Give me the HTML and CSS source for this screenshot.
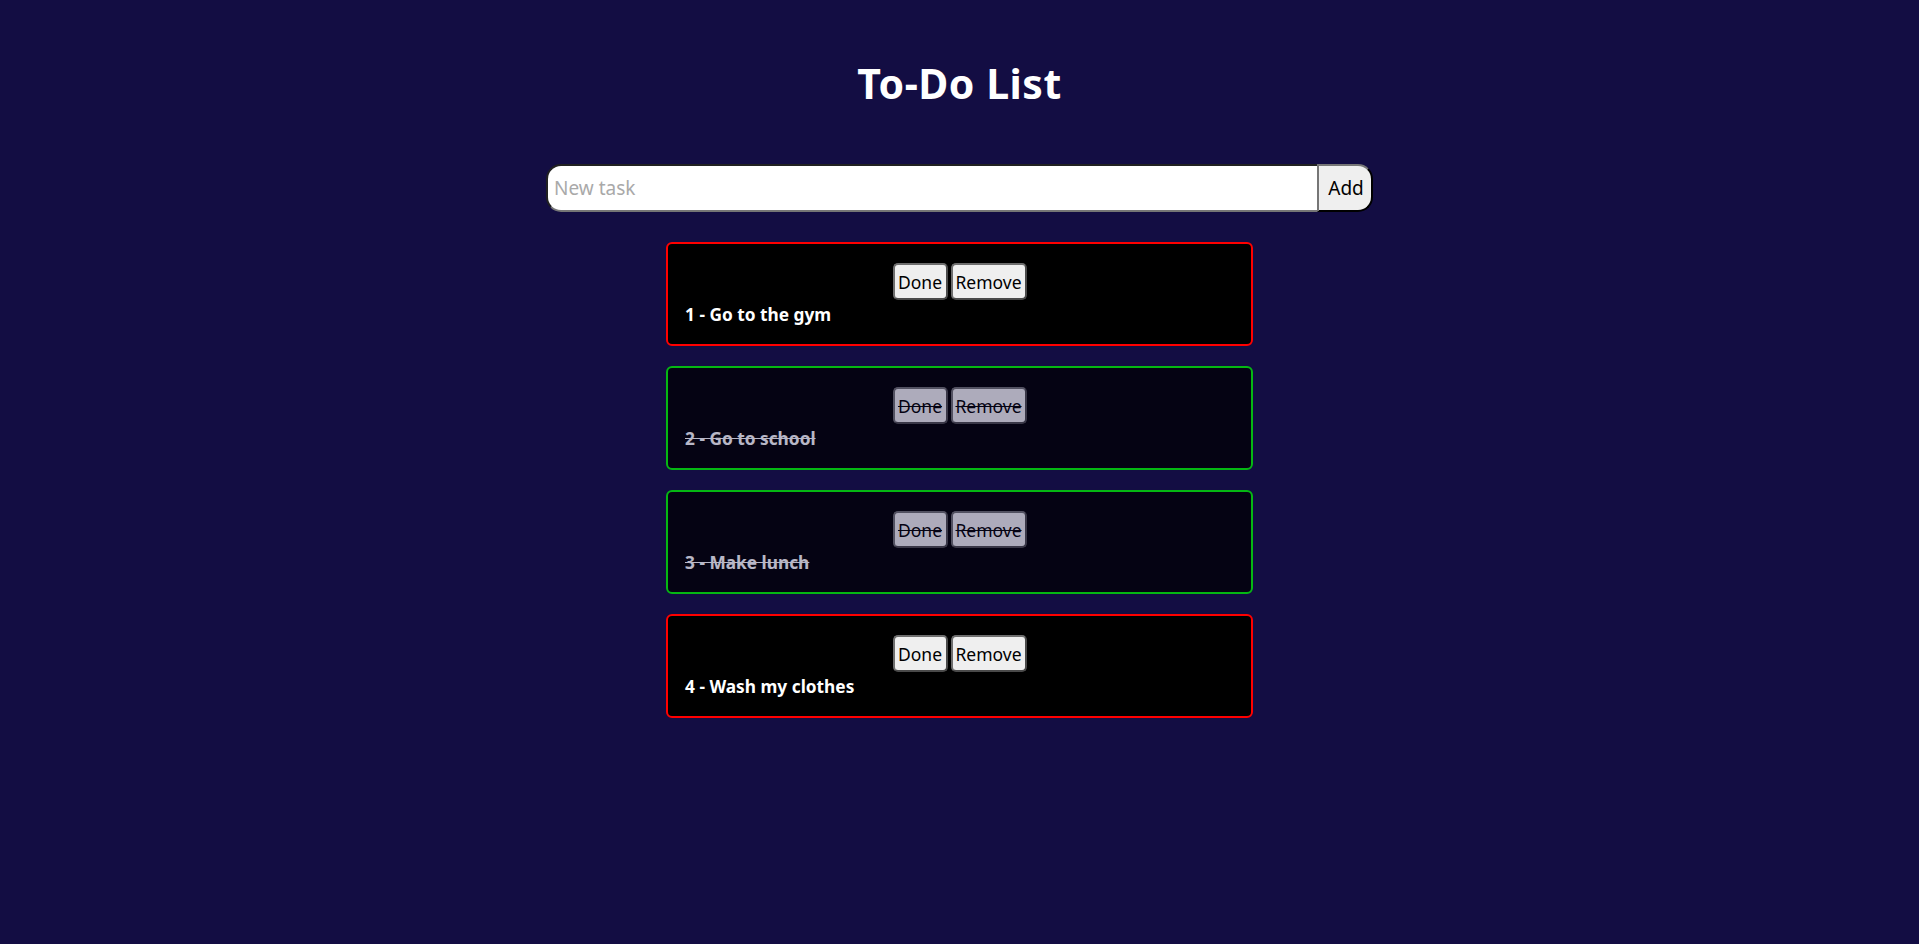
FILE: index.html
```html
<!DOCTYPE html>
<html lang="en">
<head>
<meta charset="utf-8">
<title>To-Do List</title>
<link rel="stylesheet" href="styles.css">
</head>
<body>
<main class="app">
  <h1 class="title">To-Do List</h1>
  <form class="new-task">
    <input class="new-task-input" type="text" placeholder="New task">
    <button class="new-task-add" type="button">Add</button>
  </form>
  <ul class="tasks">
    <li class="task">
      <div class="task-actions">
        <button class="btn btn-done" type="button">Done</button>
        <button class="btn btn-remove" type="button">Remove</button>
      </div>
      <h3 class="task-text">1 - Go to the gym</h3>
    </li>
    <li class="task task-completed">
      <div class="task-actions">
        <button class="btn btn-done" type="button">Done</button>
        <button class="btn btn-remove" type="button">Remove</button>
      </div>
      <h3 class="task-text">2 - Go to school</h3>
    </li>
    <li class="task task-completed">
      <div class="task-actions">
        <button class="btn btn-done" type="button">Done</button>
        <button class="btn btn-remove" type="button">Remove</button>
      </div>
      <h3 class="task-text">3 - Make lunch</h3>
    </li>
    <li class="task">
      <div class="task-actions">
        <button class="btn btn-done" type="button">Done</button>
        <button class="btn btn-remove" type="button">Remove</button>
      </div>
      <h3 class="task-text">4 - Wash my clothes</h3>
    </li>
  </ul>
</main>
</body>
</html>
```

FILE: styles.css
```css
* {
  box-sizing: border-box;
}

html, body {
  margin: 0;
  padding: 0;
}

body {
  background: #130d43;
  color: #ffffff;
  font-family: "Comic Sans MS", "Noto Sans", sans-serif;
  min-height: 944px;
}

.app {
  display: flex;
  flex-direction: column;
  align-items: center;
  padding-top: 59px;
}

.title {
  margin: 0;
  height: 48px;
  line-height: 48px;
  font-size: 41px;
  letter-spacing: 0.5px;
  font-weight: 700;
}

.new-task {
  display: flex;
  width: 827px;
  height: 48px;
  margin: 57px 0 30px;
}

.new-task-input {
  flex: 1;
  height: 100%;
  margin: 0;
  padding: 0 6px;
  border: 2px inset #767676;
  border-right: none;
  border-radius: 15px 0 0 15px;
  background: #ffffff;
  font-family: inherit;
  font-size: 19px;
  color: #000;
  outline: none;
}

.new-task-input::placeholder {
  color: #a9a9a9;
}

.new-task-add {
  width: 56px;
  height: 100%;
  margin: 0;
  padding: 0 0 0 2px;
  border: 2px outset #767676;
  border-right-color: #000;
  border-bottom-color: #000;
  border-radius: 0 15px 15px 0;
  background: #efefef;
  color: #000;
  font-family: inherit;
  font-size: 19px;
}

.tasks {
  list-style: none;
  margin: 0;
  padding: 0;
  width: 587px;
  display: flex;
  flex-direction: column;
  gap: 20px;
}

.task {
  border: 2px solid #ff0000;
  border-radius: 6px;
  background: #000000;
  padding: 19px 17px 17px;
  display: flex;
  flex-direction: column;
}

.task-completed {
  border-color: #00ff00;
  opacity: 0.7;
}

.task-completed .task-text,
.task-completed .btn {
  text-decoration: line-through;
}

.task-actions {
  display: flex;
  justify-content: center;
  gap: 3px;
  height: 37px;
}

.btn {
  height: 37px;
  margin: 0;
  padding: 0;
  border: 2px solid #6e6e6e;
  border-right-color: #4a4a4a;
  border-bottom-color: #4a4a4a;
  border-radius: 5px;
  background: #efefef;
  color: #000;
  font-family: inherit;
  font-size: 17.5px;
}

.btn-done {
  width: 55px;
}

.btn-remove {
  width: 76px;
}

.task-text {
  margin: 3px 0 0;
  height: 24px;
  line-height: 24px;
  font-size: 17.3px;
  font-weight: 700;
}
```
